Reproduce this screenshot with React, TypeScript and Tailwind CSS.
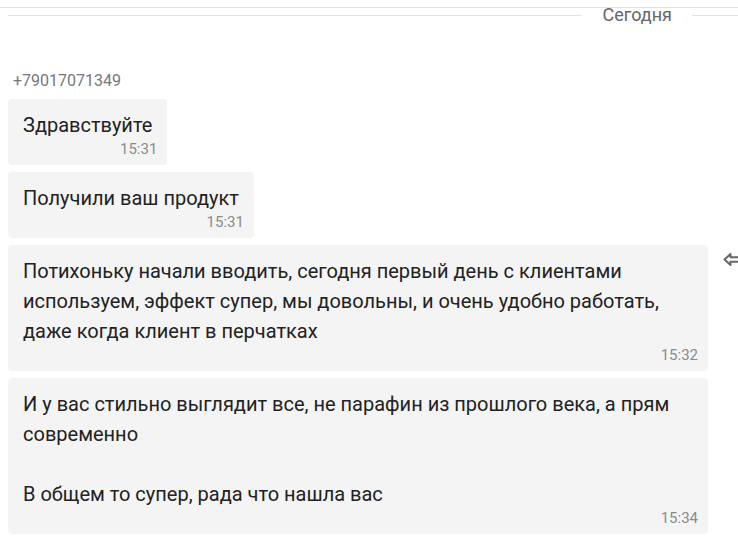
import React from "react";

type Msg = { lines: string[]; time: string; full?: boolean; reply?: boolean };

const messages: Msg[] = [
  { lines: ["Здравствуйте"], time: "15:31" },
  { lines: ["Получили ваш продукт"], time: "15:31" },
  {
    lines: [
      "Потихоньку начали вводить, сегодня первый день с клиентами",
      "используем, эффект супер, мы довольны, и очень удобно работать,",
      "даже когда клиент в перчатках",
    ],
    time: "15:32",
    full: true,
    reply: true,
  },
  {
    lines: [
      "И у вас стильно выглядит все, не парафин из прошлого века, а прям",
      "современно",
      "",
      "В общем то супер, рада что нашла вас",
    ],
    time: "15:34",
    full: true,
  },
];

function ReplyIcon() {
  return (
    <svg width="18" height="15" viewBox="0 0 18 15" className="text-[#666] shrink-0">
      <path
        d="M1.5 7.5 L7.5 2 L7.5 5.2 L17 5.2 L17 9.8 L7.5 9.8 L7.5 13 Z"
        fill="none"
        stroke="currentColor"
        strokeWidth="2"
        strokeLinejoin="round"
      />
    </svg>
  );
}

function Bubble({ msg }: { msg: Msg }) {
  return (
    <div className="flex items-start">
      <div
        className={
          "bg-[#f4f4f4] rounded-[4px] pl-[15px] pr-[15px] pt-[11px] pb-[6px] shrink-0 " +
          (msg.full ? "w-[700px]" : "")
        }
      >
        <div className="text-[20px] leading-[30px] text-[#222]">
          {msg.lines.map((l, i) => (
            <div key={i} className="h-[30px] whitespace-nowrap">{l}</div>
          ))}
        </div>
        <div className="text-right text-[15px] leading-[20px] text-[#8a8a8a] -mt-[1px] -mr-[5px]">{msg.time}</div>
      </div>
      {msg.reply && (
        <div className="ml-[15px] mt-[7px]">
          <ReplyIcon />
        </div>
      )}
    </div>
  );
}

export default function App() {
  return (
    <div className="w-[738px] h-[543px] bg-white overflow-hidden relative" style={{ fontFamily: "Roboto, 'Noto Sans', sans-serif" }}>
      <div className="h-[8px] border-b border-[#e2e2e2]" />
      <div className="flex items-center h-[14px] pl-[8px]">
        <div className="flex-1 h-px bg-[#e2e2e2]" />
        <div className="pl-[22px] pr-[20px] text-[18px] text-[#666] leading-[18px]">Сегодня</div>
        <div className="w-[46px] h-px bg-[#e2e2e2]" />
      </div>
      <div className="pl-[8px] pt-[49px]">
        <div className="text-[16px] text-[#777] pl-[5px] leading-[20px] mb-[8px]">+79017071349</div>
        <div className="flex flex-col gap-[7px]">
          {messages.map((m, i) => (
            <Bubble key={i} msg={m} />
          ))}
        </div>
      </div>
    </div>
  );
}
